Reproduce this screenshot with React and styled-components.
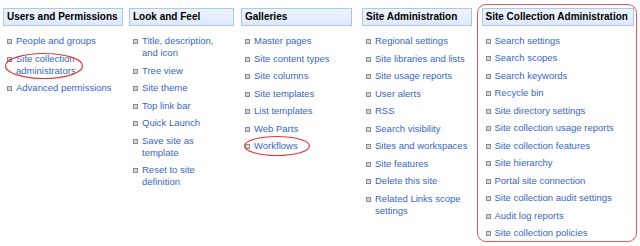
import React from "react";
import styled, { createGlobalStyle } from "styled-components";

const Global = createGlobalStyle`
  html, body { margin: 0; padding: 0; background: #ffffff; }
  body { font-family: "Liberation Sans", Arial, sans-serif; }
`;

const Row = styled.div`
  display: flex;
  align-items: flex-start;
  padding: 4px 0 0 3px;
  width: 640px;
  height: 246px;
  box-sizing: border-box;
`;

const Column = styled.div`
  width: ${(p) => p.$w}px;
  margin-right: ${(p) => p.$gap || 0}px;
  padding-top: 4px;
  flex-shrink: 0;
`;

const Highlight = styled.div`
  margin-left: 5px;
  width: 160px;
  height: 238px;
  box-sizing: border-box;
  border: 1.5px solid #e8555a;
  border-radius: 9px;
  padding: 2.5px 2.5px 0 3.5px;
  flex-shrink: 0;
`;

const Header = styled.div`
  height: 18px;
  box-sizing: border-box;
  border: 1px solid #aac7ef;
  background: linear-gradient(#eef4fd, #dde9fb);
  font-weight: bold;
  font-size: 10px;
  line-height: 16px;
  color: #000;
  padding-left: 3px;
  white-space: nowrap;
`;

const List = styled.ul`
  list-style: none;
  margin: 9px 0 0 0;
  padding: 0;
`;

const Item = styled.li`
  position: relative;
  display: flex;
  align-items: flex-start;
  margin-bottom: 5.5px;
`;

const Bullet = styled.span`
  width: 5px;
  height: 5px;
  box-sizing: border-box;
  border: 1px solid #8e8e8e;
  background: #d6d6d6;
  margin: 4px 4px 0 4px;
  flex-shrink: 0;
`;

const Link = styled.a`
  font-size: 9.5px;
  line-height: 12px;
  color: #3966bf;
  text-decoration: none;
  white-space: nowrap;
`;

const Circle = styled.svg`
  position: absolute;
  left: ${(p) => p.$x}px;
  top: ${(p) => p.$y}px;
  overflow: visible;
  pointer-events: none;
`;

function Ellipse({ x, y, w, h }) {
  return (
    <Circle $x={x} $y={y} width={w} height={h} viewBox={`0 0 ${w} ${h}`}>
      <ellipse
        cx={w / 2}
        cy={h / 2}
        rx={w / 2 - 0.5}
        ry={h / 2 - 0.5}
        fill="none"
        stroke="#e23a3a"
        strokeWidth="1.2"
      />
    </Circle>
  );
}

const columns = [
  {
    title: "Users and Permissions",
    w: 120,
    gap: 6,
    items: [
      ["People and groups"],
      ["Site collection", "administrators"],
      ["Advanced permissions"],
    ],
    mark: { index: 1, x: 2, y: 0, w: 78, h: 26 },
  },
  {
    title: "Look and Feel",
    w: 105,
    gap: 7,
    items: [
      ["Title, description,", "and icon"],
      ["Tree view"],
      ["Site theme"],
      ["Top link bar"],
      ["Quick Launch"],
      ["Save site as", "template"],
      ["Reset to site", "definition"],
    ],
  },
  {
    title: "Galleries",
    w: 111,
    gap: 10,
    items: [
      ["Master pages"],
      ["Site content types"],
      ["Site columns"],
      ["Site templates"],
      ["List templates"],
      ["Web Parts"],
      ["Workflows"],
    ],
    mark: { index: 6, x: 3, y: -4, w: 66, h: 20 },
  },
  {
    title: "Site Administration",
    w: 110,
    gap: 0,
    items: [
      ["Regional settings"],
      ["Site libraries and lists"],
      ["Site usage reports"],
      ["User alerts"],
      ["RSS"],
      ["Search visibility"],
      ["Sites and workspaces"],
      ["Site features"],
      ["Delete this site"],
      ["Related Links scope", "settings"],
    ],
  },
];

const siteCollection = {
  title: "Site Collection Administration",
  items: [
    ["Search settings"],
    ["Search scopes"],
    ["Search keywords"],
    ["Recycle bin"],
    ["Site directory settings"],
    ["Site collection usage reports"],
    ["Site collection features"],
    ["Site hierarchy"],
    ["Portal site connection"],
    ["Site collection audit settings"],
    ["Audit log reports"],
    ["Site collection policies"],
  ],
};

function Section({ title, items, mark }) {
  return (
    <>
      <Header>{title}</Header>
      <List>
        {items.map((lines, i) => (
          <Item key={i}>
            <Bullet />
            <Link href="#">
              {lines.map((l, j) => (
                <React.Fragment key={j}>
                  {j > 0 && <br />}
                  {l}
                </React.Fragment>
              ))}
            </Link>
            {mark && mark.index === i && (
              <Ellipse x={mark.x} y={mark.y} w={mark.w} h={mark.h} />
            )}
          </Item>
        ))}
      </List>
    </>
  );
}

export default function App() {
  return (
    <>
      <Global />
      <Row>
        {columns.map((c) => (
          <Column key={c.title} $w={c.w} $gap={c.gap}>
            <Section title={c.title} items={c.items} mark={c.mark} />
          </Column>
        ))}
        <Highlight>
          <Section title={siteCollection.title} items={siteCollection.items} />
        </Highlight>
      </Row>
    </>
  );
}
